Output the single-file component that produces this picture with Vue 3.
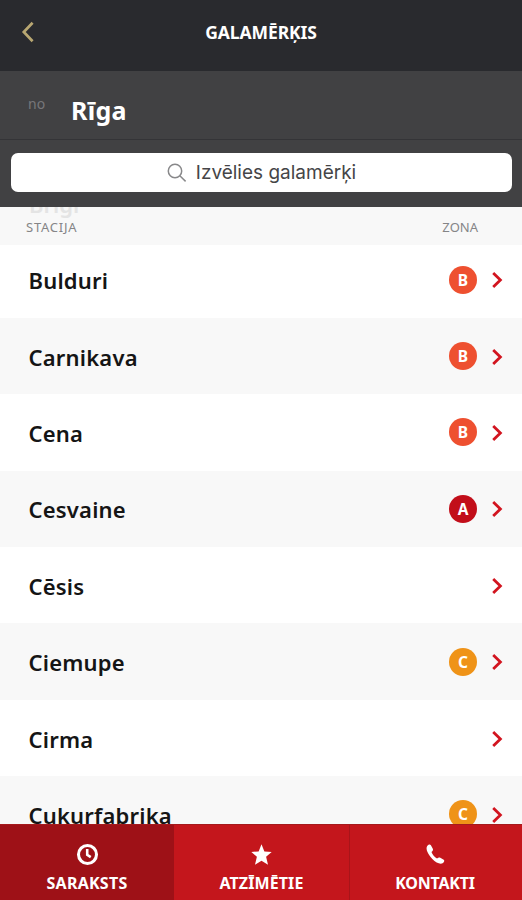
<template>
  <div class="screen">
    <header class="topbar">
      <svg class="back" viewBox="0 0 14 22"><path d="M11.6 1.8 L2.8 11 L11.6 20.2" /></svg>
      <h1>GALAMĒRĶIS</h1>
    </header>

    <section class="origin">
      <span class="from">no</span>
      <span class="city">Rīga</span>
    </section>

    <div class="search">
      <div class="field">
        <svg class="lens" viewBox="0 0 20 20">
          <circle cx="8" cy="8" r="6.7" />
          <path d="M12.8 12.8 L18.6 18.4" />
        </svg>
        <span>Izvēlies galamērķi</span>
      </div>
    </div>

    <main class="list">
      <div class="list-head">
        <span class="ghost">Brīģi</span>
        <span class="station-title">STACIJA</span>
        <span class="zone-title">ZONA</span>
      </div>
      <div class="row" v-for="s in stations" :key="s.name">
        <span class="name">{{ s.name }}</span>
        <span v-if="s.zone" class="zone" :class="'zone-' + s.zone">{{ s.zone }}</span>
        <svg class="arrow" viewBox="0 0 12 18"><path d="M2.2 2 L9.4 9 L2.2 16" /></svg>
      </div>
    </main>

    <nav class="tabs">
      <div class="tab active">
        <svg viewBox="0 0 24 24">
          <circle cx="12" cy="12" r="9.4" fill="none" stroke="currentColor" stroke-width="3.2" />
          <path d="M11.7 6.2 V12.4 L15.4 14.8" fill="none" stroke="currentColor" stroke-width="2.7" />
        </svg>
        <span class="schedule">SARAKSTS</span>
      </div>
      <div class="tab">
        <svg viewBox="0 0 24 24">
          <path d="M12 1.4 L15 8.8 L22.6 9.3 L16.8 14.4 L18.8 22.6 L12 18.4 L5.2 22.6 L7.2 14.4 L1.4 9.3 L9 8.8 Z" fill="currentColor" />
        </svg>
        <span>ATZĪMĒTIE</span>
      </div>
      <div class="tab">
        <svg viewBox="0 0 24 24">
          <path d="M3.2 3.4 C4.3 1.8 6.2 1 7.2 2.4 L9.2 6.1 C9.8 7.4 9.1 8.4 7.8 9.4 C9 12.4 10.8 14.6 13.6 16.2 C14.9 15 15.8 14.7 17 15.3 L20.6 17.4 C21.8 18.3 20.9 20.2 19.4 21.1 C16.8 22.5 12.4 20.6 8.7 16.7 C4.4 12.2 1.4 6.4 3.2 3.4 Z" fill="currentColor" />
        </svg>
        <span class="contacts">KONTAKTI</span>
      </div>
    </nav>
  </div>
</template>

<script setup>
const stations = [
  { name: 'Bulduri', zone: 'B' },
  { name: 'Carnikava', zone: 'B' },
  { name: 'Cena', zone: 'B' },
  { name: 'Cesvaine', zone: 'A' },
  { name: 'Cēsis' },
  { name: 'Ciemupe', zone: 'C' },
  { name: 'Cirma' },
  { name: 'Cukurfabrika', zone: 'C' }
]
</script>

<style>
body { margin: 0; background: #fff; }
</style>

<style scoped>
.screen {
  width: 522px; height: 900px; overflow: hidden;
  display: flex; flex-direction: column;
  font-family: "Noto Sans", "Open Sans", sans-serif; color: #151515;
}
.screen * { box-sizing: border-box; }

.topbar {
  flex: none; height: 71px; padding-bottom: 7px; background: #292a2e;
  display: grid; grid-template-columns: 60px 1fr 60px; align-items: center;
}
.back { width: 14px; height: 22px; margin-left: 21px; fill: none; stroke: #b8a772; stroke-width: 2.7; }
h1 {
  margin: 0; text-align: center; white-space: nowrap;
  color: #fff; font-size: 17.5px; font-weight: 700; line-height: 24px; letter-spacing: -0.1px;
}

.origin {
  flex: none; height: 69px; padding-left: 28px; background: #414143;
  border-bottom: 1px solid #343437; display: flex;
}
.from { width: 43px; padding-top: 24px; color: #77777a; font-size: 14px; line-height: 18px; }
.city { padding-top: 22px; color: #fff; font-size: 25px; font-weight: 700; line-height: 34px; letter-spacing: 0.3px; }

.search { flex: none; height: 67px; padding: 13px 10px 15px 11px; background: #414143; }
.field {
  height: 39px; border-radius: 7px; background: #fff;
  display: flex; align-items: center; justify-content: center; gap: 9px;
  color: #454547; font-family: Inter, sans-serif; font-size: 19px; line-height: 24px;
}
.lens { width: 20px; height: 20px; fill: none; stroke: #88888a; stroke-width: 1.5; }

.list { flex: 1; min-height: 0; overflow: hidden; }
.list-head {
  position: relative; height: 38px; padding: 10px 44px 0 26px; margin-bottom: -3.5px;
  background: #f8f8f8; overflow: hidden;
  display: flex; justify-content: space-between;
  color: #858587; font-size: 13px; line-height: 20px;
}
.station-title { letter-spacing: 0.75px; }
/* row still scrolling out under the column titles */
.ghost {
  position: absolute; left: 29px; top: -17px;
  color: #e4e4e4; font-size: 22px; font-weight: 600; line-height: 28px;
}
.row {
  height: 76.4px; padding: 0 19px 0 28.5px;
  display: flex; align-items: center;
}
.row:nth-child(odd) { background: #f8f8f8; }
.name { flex: 1; padding-top: 1px; font-size: 22px; font-weight: 600; line-height: 30px; letter-spacing: 0.2px; }
.zone {
  width: 28px; height: 28px; margin-right: 14px; border-radius: 50%;
  color: #fff; font-size: 15.5px; font-weight: 700; line-height: 28px; text-align: center;
}
.zone-A { background: #c20e1a; }
.zone-B { background: #ee5030; }
.zone-C { background: #ef9318; }
.arrow { width: 12px; height: 18px; margin-top: 1px; fill: none; stroke: #d2141f; stroke-width: 2.8; }

.tabs {
  flex: none; height: 76px; background: #c4161c; border-top: 1px solid #a51a1d;
  display: grid; grid-template-columns: 174px 175px 173px;
}
.tab {
  padding-top: 18px; color: #fff;
  display: flex; flex-direction: column; align-items: center;
  font-size: 16px; font-weight: 700; line-height: 22px; letter-spacing: 0.1px;
}
.tab + .tab + .tab { padding-right: 2px; border-left: 1px solid #a81419; }
.tab svg { width: 23px; height: 23px; margin-bottom: 6px; }
.active { background: #9e1117; }
.schedule { letter-spacing: 0.25px; }
.contacts { letter-spacing: -0.2px; }
</style>
